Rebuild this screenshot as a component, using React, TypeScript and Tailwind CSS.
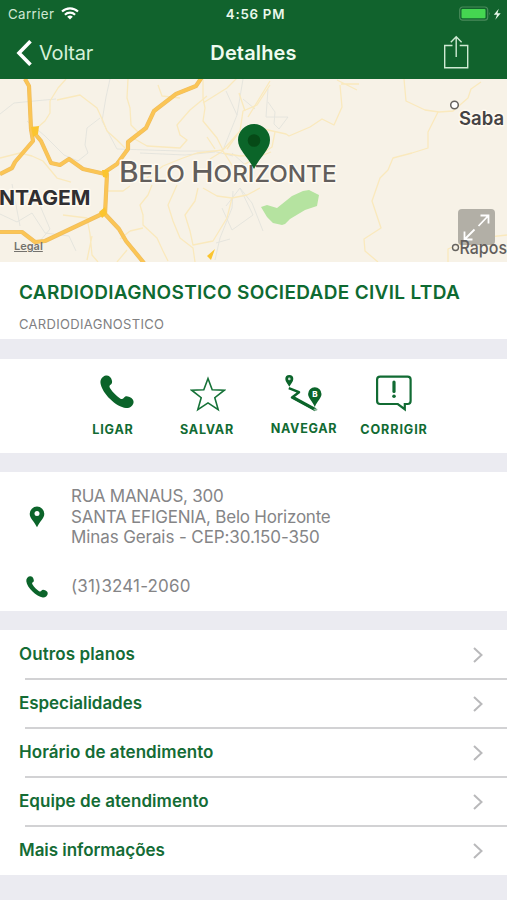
import type { ReactNode } from "react";

const ACTIONS = [
  { label: "LIGAR", icon: <PhoneIcon className="ml-[7px] h-[34px] w-[34px]" />, box: "w-[80px] ml-[73px]", text: "text-[12.6px] tracking-[0.8px] mt-[6px]" },
  { label: "SALVAR", icon: <StarIcon />, box: "w-[80px] ml-[14px]", text: "text-[12.6px] tracking-[0.7px] mt-[6px]" },
  { label: "NAVEGAR", icon: <RouteIcon />, box: "w-[80px] ml-[17px]", text: "text-[12.6px] tracking-[0.7px] mt-[5px]" },
  { label: "CORRIGIR", icon: <ReportIcon />, box: "w-[80px] ml-[10px]", text: "text-[12.6px] tracking-[0.9px] mt-[6px]" },
];

const SECTIONS = [
  { label: "Outros planos", tracking: "tracking-[0.1px]" },
  { label: "Especialidades", tracking: "tracking-[-0.05px]" },
  { label: "Horário de atendimento", tracking: "tracking-[0.05px]" },
  { label: "Equipe de atendimento", tracking: "tracking-[0.05px]" },
  { label: "Mais informações", tracking: "tracking-[-0.05px]" },
];

function PhoneIcon({ className }: { className: string }) {
  return (
    <svg viewBox="0 0 36 36" className={className} fill="#0b642a">
      <path d="M6.3.5C9 .1 10.900 1.500 12 4c1 2.500 1.500 5-.9 6.400-1.500.9-1.300 2.200-.4 3.700 2.700 4.400 6.400 7.900 10.600 10.700 1.500 1 2.900.8 3.800-.5 1.600-2.200 3.300-2.100 6.200-.9 3 1.300 4.700 3.500 4.200 6-.6 3.300-4 5.900-8 5.600-5.200-.4-11.700-4.200-16.800-9.500C5.200 20 1.100 13.500.5 8.400.1 4.600 2.700 1.100 6.300.5z" />
    </svg>
  );
}

function StarIcon() {
  return (
    <svg viewBox="0 0 36 36" className="ml-[2px] mt-px h-[36px] w-[36px]" fill="none" stroke="#167238" strokeWidth="1.6">
      <path d="M18 2.500l4.200 11.200 12.100.5-9.500 7.500 3.400 11.900L18 26.900 7.800 33.600l3.400-11.900-9.500-7.500 12.100-.5z" />
    </svg>
  );
}

function RouteIcon() {
  return (
    <svg viewBox="0 0 40 38" className="mt-[-1px] h-[38px] w-[40px]" fill="none">
      <path d="M5.300 1a4 4 0 0 1 4 4c0 2.600-2.500 4.800-4 7.700C3.800 9.800 1.300 7.600 1.300 5a4 4 0 0 1 4-4z" fill="#0b642a" />
      <circle cx="5.300" cy="4.900" r="1.300" fill="#c9ddd0" />
      <path d="M4.800 14.200l10.200 4-7 5.200L31.500 36.200" stroke="#0b642a" strokeWidth="2.500" strokeLinejoin="round" />
      <path d="M9.500 23.500L31.500 35.500" stroke="#0b642a" strokeWidth="2.800" />
      <path d="M30.800 13.300a6.700 6.700 0 0 1 6.700 6.700c0 4-4.200 6.900-6.700 13-2.500-6.100-6.700-9-6.700-13a6.700 6.700 0 0 1 6.700-6.700z" fill="#0b642a" />
      <text x="30.800" y="23.200" fontSize="8" fontWeight="800" fill="#fff" textAnchor="middle">B</text>
      <ellipse cx="31.500" cy="35.600" rx="2" ry="1.200" fill="#8fb59c" />
    </svg>
  );
}

function ReportIcon() {
  return (
    <svg viewBox="0 0 38 38" className="mt-[-1px] h-[38px] w-[38px]" fill="none" stroke="#116b33" strokeWidth="2.200">
      <path d="M5.100 2.600h27.500a3 3 0 0 1 3 3v21.400a3 3 0 0 1-3 3h-2.800v5.200l-7-5.200H5.100a3 3 0 0 1-3-3V5.600a3 3 0 0 1 3-3z" strokeLinejoin="miter" />
      <path d="M19 8v9.500" strokeWidth="3.200" strokeLinecap="round" />
      <circle cx="19" cy="22.300" r="1.800" fill="#116b33" stroke="none" />
    </svg>
  );
}

function StatusBar() {
  return (
    <div className="flex h-[27px] items-center px-2 text-[13.300px] leading-none">
      <div className="flex flex-1 items-center gap-[7px] text-[#cfe8d4]">
        <span className="relative top-px tracking-[0.400px]">Carrier</span>
        <svg viewBox="0 0 18 13" className="h-[13px] w-[18px]" fill="none" stroke="#fff" strokeWidth="2.100">
          <path d="M1 4.600a11.500 11.500 0 0 1 16 0" />
          <path d="M3.900 7.700a7.300 7.300 0 0 1 10.200 0" />
          <path d="M9 12.400L6.200 9.800a4 4 0 0 1 5.600 0z" fill="#fff" stroke="none" />
        </svg>
      </div>
      <span className="relative left-[2px] top-px font-semibold tracking-[0.750px] text-[#e9f8eb]">4:56 PM</span>
      <div className="flex flex-1 justify-end">
        <svg viewBox="0 0 44 16" className="mr-[-4px] h-[16px] w-[44px]">
          <rect x="0.700" y="1" width="28" height="13.200" rx="3" fill="none" stroke="#4a8a5b" strokeWidth="1.200" />
          <rect x="2.500" y="3" width="24" height="9.200" rx="1" fill="#45d651" />
          <path d="M30 6q1.600 1.500 0 3.400z" fill="#4a8a5b" />
          <path d="M39.800 2.700l-5 6h3.200l-1.700 5 5.400-6.500h-3.300z" fill="#e9f8eb" />
        </svg>
      </div>
    </div>
  );
}

function NavBar() {
  return (
    <div className="flex h-[52px] items-center pl-[16px] pr-[38px]">
      <div className="flex flex-1 items-center gap-[7px]">
        <svg viewBox="0 0 16 26" className="h-[26px] w-[16px]" fill="none" stroke="#fff" strokeWidth="3.600">
          <path d="M14.500 1.200L3 13l11.500 11.800" />
        </svg>
        <span className="text-[20px] tracking-[-0.200px] text-[#d5f1d9]">Voltar</span>
      </div>
      <h1 className="mr-[-22px] text-[20px] font-semibold tracking-[0.150px] text-[#effbf0]">Detalhes</h1>
      <div className="flex flex-1 justify-end">
        <svg viewBox="0 0 26 34" className="mt-[-2px] h-[34px] w-[26px]" fill="none" stroke="#cfead3" strokeWidth="1.400">
          <path d="M9.500 10.500H1.700v22.300h23V10.500h-8" />
          <path d="M13.200 22V2M7.800 7.200L13.200 1.800l5.400 5.400" />
        </svg>
      </div>
    </div>
  );
}

function MapView() {
  return (
    <div className="relative h-[183px]">
      <svg viewBox="0 0 507 183" className="block h-[183px] w-full" fill="none" strokeLinejoin="round">
        <rect width="507" height="183" fill="#f7f2e7" />
        {/* minor streets */}
        <g stroke="#e3e3dd" strokeWidth="0.900">
          <path d="M0 35l14-11 20-2 22-2M110 0l-4 18-4 24 15 28 63 2 33 0 20 5M140 74l45 2 30-3" />
          <path d="M100 39l-13 10-2 17 3 8-10 8-14-6-19-19-18-15M0 135l17 8 15-9 13 20 24 3 7 15M12 105l8 42M38 122l12 28-10 12M20 112l22 8 18-6" />
          <path d="M226 12l11 24-14 35M237 36l6-36M243 20l12 10M232 74l20 18M240 70l18 8" />
          <path d="M233 112l-1 17-12 30-5 22M222 129l10 22 21-15-13-27 12 15 11 28M240 109l-14 18M216 164l14-4" />
          <path d="M268 10l-2 28 22 0-9 12-5-5 1-12-7-10" />
        </g>
        {/* secondary roads */}
        <g stroke="#fae9bd" strokeWidth="1.300">
          <path d="M66 0l-8 9-8 13 0 12-5 8-8 7M57 21l23-5 17 13 6 13 4 10 10 9 8 8M128 0l-1 19 3 10 1 17 7 7M158 6l4 11 18 2" />
          <path d="M207 17l-17 14-7 8-6 7 3 10 7 5-7 8-33-2-14-8M203 0v19l2 10-2 13 14 17 6 12M203 24l24-15 10-10M223 71l17-19 3-20 14-6 13-20" />
          <path d="M223 71l-26 3-14 5-20 8-16 12M223 74l17 3 20-1 12-8 3-15M245 32l-6-18M215 70l-8-12M227 70l10-14M210 80l13-8 14 22" />
          <path d="M152 106l-4 10-8 10 3 10v10l14 13 6 13 5 10M177 106l-9 20 5 16 7 17 13 10 2 14M198 109l-3 13-10 14 5 16 3 14 20-4 14-23 5-20 15-3 13-7M203 109l14 8 15 2" />
          <path d="M105 112h18l7-5M63 136l24 3 3 16 2 21 6 7M130 152l13-3M120 160l10-8M117 183l10-12M0 79l20-5 12 3 11 5 14 17 14 4M92 157l-5 24" />
          <path d="M248 38l22-36M257 75l4-10-6-10 4-6 27 6 3 2 21-9 12-8 12 6 8-18-2-22M337 1l20 10M341 5h18M236 90l22-12 13-5" />
          <path d="M404 0l2 22 19 9 14 2 14-1 15-13 3-9 10-7M438 33l-10 20v16l-16 5-19 5-5 12-8 8-8 23 9 27-17 11 1 12 13 11M448 183v-13l23-10 36-4" />
        </g>
        {/* highways */}
        <g stroke="#eebd60" strokeWidth="4.200">
          <path d="M25 0l4 7 2 43 10 12 10 22 9 2 9-6 14 10 22 5 2 0-2 40 14 15 7 12 18 22" />
          <path d="M31 50l2 12-18 21-3 6-12 6M105 93l12-8 11-15V63l18-14 8-17 22-17 20-8 6-9M0 153h22l13 10 10-1 57-27" />
        </g>
        <g stroke="#fbc555" strokeWidth="3">
          <path d="M25 0l4 7 2 43 10 12 10 22 9 2 9-6 14 10 22 5 2 0-2 40 14 15 7 12 18 22" />
          <path d="M31 50l2 12-18 21-3 6-12 6M105 93l12-8 11-15V63l18-14 8-17 22-17 20-8 6-9M0 153h22l13 10 10-1 57-27" />
        </g>
        <path d="M31 48l8-1-1 8-5 3zM102 91l7 0-2 8-4-1zM99 133l6-5 2 7-5 4zM215 170l-8 7 4 4z" fill="#fbc52f" />
        <path d="M261 128l6-2 10 3 15-12 11-5 6-1 10 5-2 11-12 4-15 9-5 5-3 1-9-2-6-6z" fill="#b5e3a0" />
        <g fontFamily="Inter, sans-serif" stroke="#fffaf0" strokeWidth="3" paintOrder="stroke" strokeLinejoin="round">
          <text x="-1" y="125.500" fontSize="20.500" fontWeight="700" fill="#302f32" textLength="91.500" lengthAdjust="spacingAndGlyphs">NTAGEM</text>
          <text x="119" y="103.300" fontSize="29" fontWeight="500" fill="#625e5c" textLength="217.500" lengthAdjust="spacingAndGlyphs">B<tspan fontSize="23.500">ELO </tspan>H<tspan fontSize="23.500">ORIZONTE</tspan></text>
          <text x="459" y="46" fontSize="18.500" fontWeight="600" fill="#454344">Saba</text>
        </g>
        <circle cx="454.500" cy="26" r="3.800" fill="#fff" stroke="#65625f" strokeWidth="1.500" />
        <path d="M238 61a16 16 0 0 1 32 0c0 9.500-9 15.500-16 29-7-13.500-16-19.500-16-29z" fill="#0b6529" />
        <circle cx="254" cy="61.500" r="6.300" fill="#064a17" />
      </svg>
      <span className="absolute bottom-[9px] left-[14px] text-[11px] font-semibold leading-[14px] text-[#74726d] underline">Legal</span>
      <svg viewBox="0 0 49 54" className="absolute bottom-0 right-0 h-[54px] w-[57px]" preserveAspectRatio="xMaxYMin meet" fill="none">
        <rect x="0" y="1" width="37" height="36" rx="4" fill="#b2afa6" />
        <path d="M20.500 18l9.500-10M22.500 7.500H30.500V15.500M16.500 21.500l-10 10M6.500 23.500v8h8" stroke="#fff" strokeWidth="1.800" />
        <circle cx="-2.500" cy="39.500" r="3" fill="#f7f2e7" stroke="#65625f" strokeWidth="1.400" />
        <text x="1.500" y="46" fontSize="18" fontWeight="500" fill="#625e5c" textLength="47.500" lengthAdjust="spacingAndGlyphs">Rapos</text>
      </svg>
    </div>
  );
}

function InfoRow({ icon, children }: { icon: ReactNode; children: ReactNode }) {
  return (
    <div className="flex items-center">
      <div className="flex w-[71px] items-center pl-[26px]">{icon}</div>
      <div className="text-[17px] leading-[20.500px] text-[#858587]">{children}</div>
    </div>
  );
}

export default function App() {
  return (
    <main className="min-h-[900px] w-[507px] overflow-hidden bg-[#ebebf1] font-['Inter',sans-serif]">
      <header className="h-[79px] bg-[#11632d]">
        <StatusBar />
        <NavBar />
      </header>
      <MapView />

      <section className="h-[77px] bg-white px-[19px] pt-[18px]">
        <h2 className="whitespace-nowrap text-[19px] font-semibold leading-[26px] tracking-[0.320px] text-[#0e6a31]">
          CARDIODIAGNOSTICO SOCIEDADE CIVIL LTDA
        </h2>
        <p className="mt-[9px] text-[13px] leading-[18px] tracking-[0.320px] text-[#808082]">CARDIODIAGNOSTICO</p>
      </section>

      <section className="mt-[20px] flex h-[94px] bg-white pt-[16px]">
        {ACTIONS.map((action) => (
          <button key={action.label} className={`flex flex-col items-center ${action.box}`}>
            <span className="flex h-[40px] items-start">{action.icon}</span>
            <span className={`font-bold leading-[18px] text-[#116b33] ${action.text}`}>{action.label}</span>
          </button>
        ))}
      </section>

      <section className="mt-[19px] h-[139px] bg-white pt-[14px]">
        <InfoRow
          icon={
            <svg viewBox="0 0 22 22" className="h-[22px] w-[22px]">
              <path d="M11 .5a7.300 7.300 0 0 1 7.300 7.300c0 4.500-4.500 7.500-7.300 13.500C8.200 15.300 3.700 12.300 3.700 7.800A7.300 7.300 0 0 1 11 .5z" fill="#0b642a" />
              <circle cx="11" cy="7.500" r="2.500" fill="#fff" />
            </svg>
          }
        >
          <p className="tracking-[-0.250px]">RUA MANAUS, 300</p>
          <p className="tracking-[-0.230px]">SANTA EFIGENIA, Belo Horizonte</p>
          <p className="tracking-[-0.100px]">Minas Gerais - CEP:30.150-350</p>
        </InfoRow>
        <div className="mt-[28px]">
          <InfoRow icon={<PhoneIcon className="h-[22px] w-[22px]" />}>
            <p className="tracking-[0.150px]">(31)3241-2060</p>
          </InfoRow>
        </div>
      </section>

      <nav className="mt-[19px] h-[245px] bg-white">
        {SECTIONS.map((section, i) => (
          <div key={section.label} className="h-[49px]">
            <div className="flex h-[48px] items-center justify-between pl-[19px] pr-[23px]">
              <span className={`text-[17px] font-semibold leading-[24px] text-[#146c35] ${section.tracking}`}>{section.label}</span>
              <svg viewBox="0 0 12 18" className="mt-[2px] h-[18px] w-[12px]" fill="none" stroke="#b9b9bb" strokeWidth="2">
                <path d="M2 2l7.500 7L2 16" />
              </svg>
            </div>
            {i < SECTIONS.length - 1 && <div className="ml-[25px] h-[2px] bg-[#d2d2d4]" />}
          </div>
        ))}
      </nav>
    </main>
  );
}
